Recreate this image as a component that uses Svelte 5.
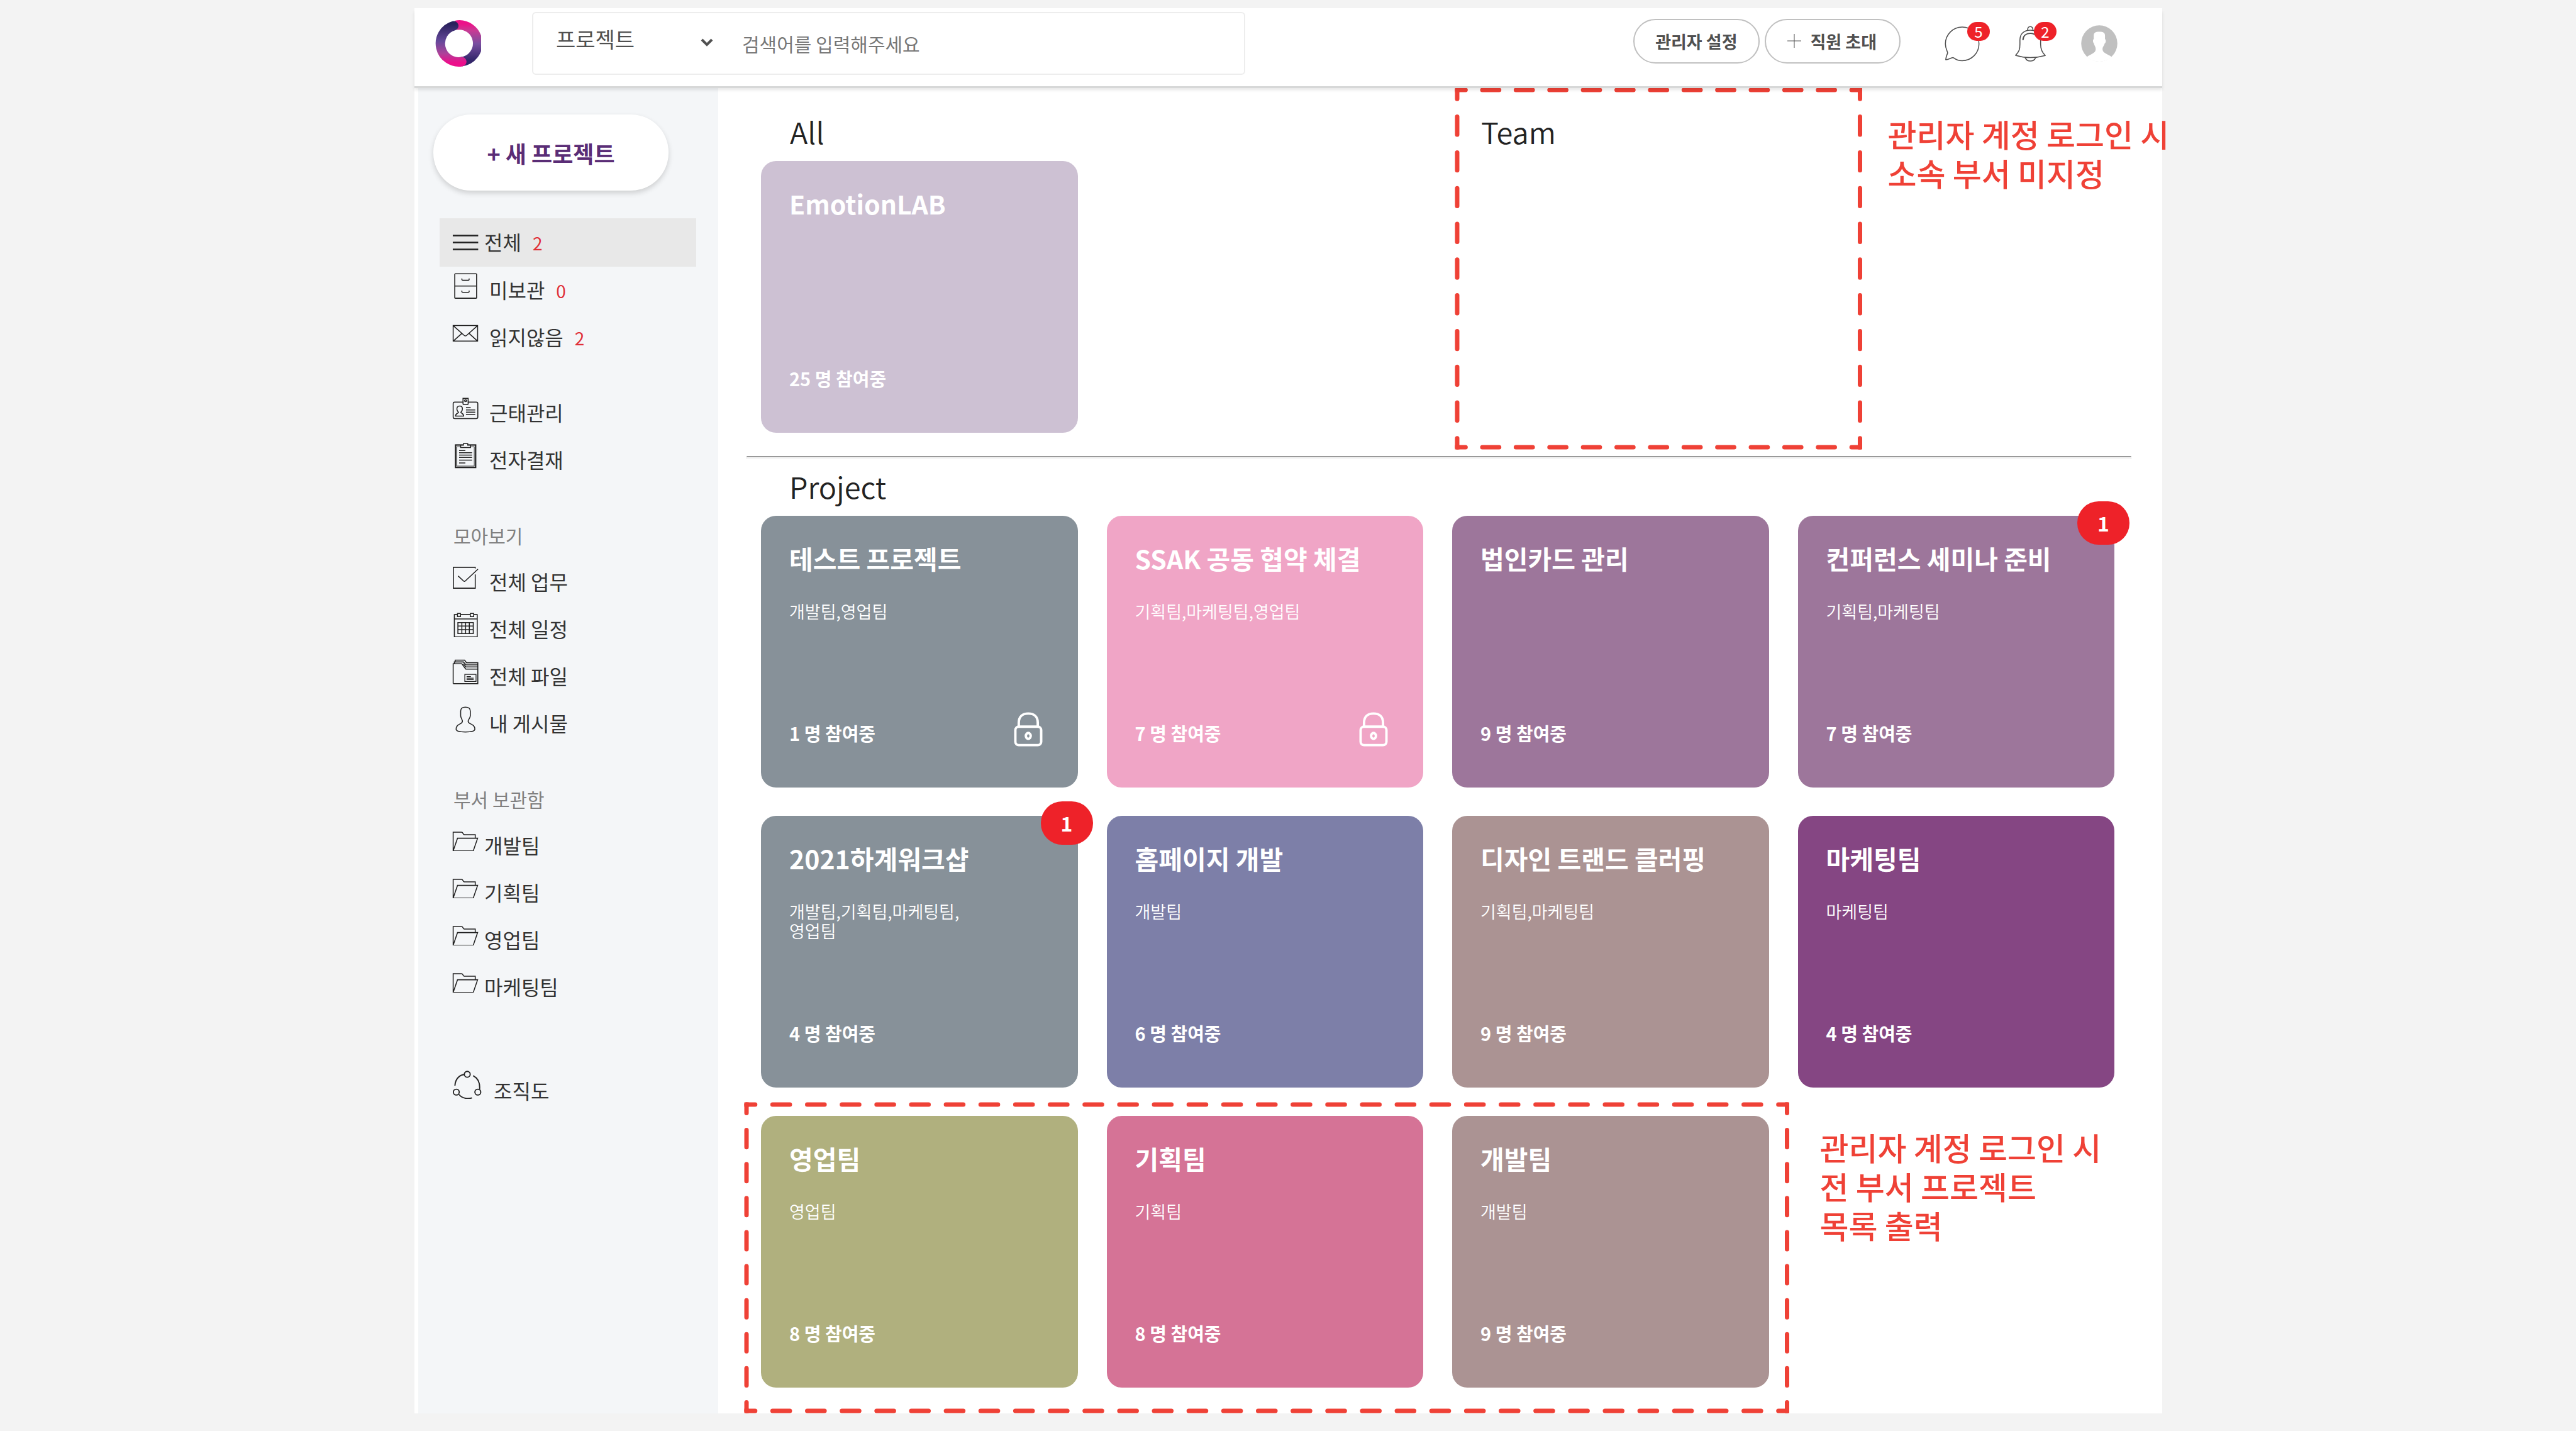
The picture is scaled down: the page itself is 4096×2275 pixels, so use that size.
<script lang="ts">
  type Item = { label: string; icon: string; count?: number; active?: boolean; tight?: boolean };
  type Card = { title: string; color: string; teams?: string[]; members: number; locked?: boolean; badge?: number };

  const groups: { heading?: string; items: Item[] }[] = [
    {
      items: [
        { label: '전체', icon: 'menu', count: 2, active: true, tight: true },
        { label: '미보관', icon: 'cabinet', count: 0 },
        { label: '읽지않음', icon: 'mail', count: 2 },
      ],
    },
    {
      items: [
        { label: '근태관리', icon: 'idcard' },
        { label: '전자결재', icon: 'clipboard' },
      ],
    },
    {
      heading: '모아보기',
      items: [
        { label: '전체 업무', icon: 'check' },
        { label: '전체 일정', icon: 'calendar' },
        { label: '전체 파일', icon: 'files' },
        { label: '내 게시물', icon: 'person' },
      ],
    },
    {
      heading: '부서 보관함',
      items: [
        { label: '개발팀', icon: 'folder', tight: true },
        { label: '기획팀', icon: 'folder', tight: true },
        { label: '영업팀', icon: 'folder', tight: true },
        { label: '마케팅팀', icon: 'folder', tight: true },
      ],
    },
  ];

  const all: Card = { title: 'EmotionLAB', color: 'lilac', members: 25 };

  const projects: Card[] = [
    { title: '테스트 프로젝트', color: 'slate', teams: ['개발팀,영업팀'], members: 1, locked: true },
    { title: 'SSAK 공동 협약 체결', color: 'pink', teams: ['기획팀,마케팅팀,영업팀'], members: 7, locked: true },
    { title: '법인카드 관리', color: 'mauve', members: 9 },
    { title: '컨퍼런스 세미나 준비', color: 'mauve', teams: ['기획팀,마케팅팀'], members: 7, badge: 1 },
    { title: '2021하계워크샵', color: 'slate', teams: ['개발팀,기획팀,마케팅팀,', '영업팀'], members: 4, badge: 1 },
    { title: '홈페이지 개발', color: 'blue', teams: ['개발팀'], members: 6 },
    { title: '디자인 트랜드 클러핑', color: 'taupe', teams: ['기획팀,마케팅팀'], members: 9 },
    { title: '마케팅팀', color: 'plum', teams: ['마케팅팀'], members: 4 },
  ];

  const departments: Card[] = [
    { title: '영업팀', color: 'olive', teams: ['영업팀'], members: 8 },
    { title: '기획팀', color: 'rose', teams: ['기획팀'], members: 8 },
    { title: '개발팀', color: 'taupe', teams: ['개발팀'], members: 9 },
  ];
</script>

{#snippet icon(name: string)}
  {#if name === 'menu'}
    <svg class="icon" viewBox="205 203 134 86" aria-hidden="true"><path stroke-width="8" d="M208 211H337M208 246H337M208 281H337" /></svg>
  {:else if name === 'cabinet'}
    <svg class="icon" viewBox="205 401 134 132" aria-hidden="true"><rect x="218" y="405" width="111" height="124" rx="3" /><path d="M218 467H329M254 429V434Q254 438 259 438H287Q291 438 291 434V429M254 490V495Q254 499 259 499H287Q291 499 291 495V490" /></svg>
  {:else if name === 'mail'}
    <svg class="icon" viewBox="205 661 134 88" aria-hidden="true"><path d="M210 666H334V745H210ZM210 666L266 716Q272 721 278 716L334 666M210 745L254 706M334 745L291 706" /></svg>
  {:else if name === 'idcard'}
    <svg class="icon" viewBox="205 1032 134 111" aria-hidden="true"><path d="M258 1055H218Q210 1055 210 1063V1131Q210 1139 218 1139H327Q335 1139 335 1131V1063Q335 1055 327 1055H287M260 1036H286V1064Q286 1068 282 1068H264Q260 1068 260 1064Z" /><circle cx="273" cy="1048" r="5" /><path d="M243 1075C232 1075 228 1082 229 1092C230 1100 234 1103 237 1107C235 1113 222 1112 222 1126H263C263 1112 251 1113 249 1107C252 1103 257 1098 257 1090C257 1080 252 1075 243 1075ZM275 1083H299M275 1095H322M275 1106H322M275 1118H322" /></svg>
  {:else if name === 'clipboard'}
    <svg class="icon" viewBox="205 1258 134 131" aria-hidden="true"><rect x="222" y="1269" width="102" height="114" stroke-width="7" /><rect x="229" y="1278" width="88" height="98" stroke-width="3" /><path fill="#f4f6f8" d="M248 1282V1270H262V1262H284V1270H298V1282Z" /><path d="M240 1297H272M240 1308H306M240 1320H306M240 1332H306M240 1346H306M240 1360H272" /></svg>
  {:else if name === 'check'}
    <svg class="icon" viewBox="205 320 134 118" aria-hidden="true"><path d="M322 332V326H211V432H322V362M235 370L262 395Q267 400 272 395L336 335" /></svg>
  {:else if name === 'calendar'}
    <svg class="icon" viewBox="205 554 134 126" aria-hidden="true"><path d="M231 564H216V677H332V564H315M248 564H296M216 586H332M232 558H247V574H232ZM297 558H314V574H297ZM234 604H312V660H234ZM254 604V660M273 604V660M292 604V660M234 622H312M234 640H312" /></svg>
  {:else if name === 'files'}
    <svg class="icon" viewBox="205 788 134 129" aria-hidden="true"><path d="M210 912V811H254L274 838H335M210 912H335V806H278L268 793H220V802M216 810V802H262L275 817H335M262 811L274 827H335" /><path stroke-width="4" d="M269 865H326V901H269ZM278 876H300M278 884H314M278 891H314" /></svg>
  {:else if name === 'person'}
    <svg class="icon" viewBox="205 1026 134 134" aria-hidden="true"><path d="M272 1030C254 1030 248 1038 248 1050V1072C248 1088 257 1090 257 1102C257 1118 225 1112 225 1142C225 1152 246 1156 272 1156C298 1156 320 1152 320 1142C320 1112 286 1118 286 1102C286 1090 297 1088 297 1072V1050C297 1038 290 1030 272 1030Z" /></svg>
  {:else if name === 'folder'}
    <svg class="icon" viewBox="205 0 134 102" aria-hidden="true"><path d="M210 98V3H252Q257 3 259 8T266 16H322V34M210 98L232 34H334L312 98Z" /></svg>
  {/if}
{/snippet}

{#snippet frame(cols: number, rows: number)}
  <svg class="frame" aria-hidden="true">
    <line x1="0" y1="0" x2="100%" y2="0" pathLength={cols} />
    <line x1="0" y1="100%" x2="100%" y2="100%" pathLength={cols} />
    <line x1="0" y1="0" x2="0" y2="100%" pathLength={rows} />
    <line x1="100%" y1="0" x2="100%" y2="100%" pathLength={rows} />
    <line class="corner" x1="0" y1="0" x2="0" y2="0" />
    <line class="corner" x1="100%" y1="0" x2="100%" y2="0" />
    <line class="corner" x1="0" y1="100%" x2="0" y2="100%" />
    <line class="corner" x1="100%" y1="100%" x2="100%" y2="100%" />
  </svg>
{/snippet}

{#snippet card(c: Card)}
  <a class="card {c.color}" href="#project">
    <h3>{c.title}</h3>
    {#if c.teams}
      <p class="teams">{#each c.teams as line}<span>{line}</span>{/each}</p>
    {/if}
    <div class="foot">
      <span class="members">{c.members} 명 참여중</span>
      {#if c.locked}
        <svg class="lock" viewBox="0 0 59 71" role="img" aria-label="비공개">
          <rect x="3" y="30" width="53" height="38" rx="7" />
          <path d="M10 29V22C10 9 18 3 29.500 3S49 9 49 22V29" />
          <ellipse cx="29.500" cy="49" rx="5" ry="6" />
        </svg>
      {/if}
    </div>
    {#if c.badge}<span class="badge">{c.badge}</span>{/if}
  </a>
{/snippet}

<div class="canvas">
  <div class="page">
    <header>
      <a class="logo" href="#home" aria-label="홈">
        <svg viewBox="0 0 100 100" aria-hidden="true">
          <defs>
            <linearGradient id="ringRight" x1="0" y1="0" x2="0" y2="100" gradientUnits="userSpaceOnUse">
              <stop offset="0.08" stop-color="#ec1189" />
              <stop offset="0.22" stop-color="#c93a94" />
              <stop offset="0.5" stop-color="#784fa0" />
              <stop offset="0.85" stop-color="#33266a" />
            </linearGradient>
            <linearGradient id="ringLeft" x1="0" y1="0" x2="0" y2="100" gradientUnits="userSpaceOnUse">
              <stop offset="0.08" stop-color="#29205c" />
              <stop offset="0.45" stop-color="#66499b" />
              <stop offset="0.7" stop-color="#ab439a" />
              <stop offset="0.9" stop-color="#ec0f8b" />
            </linearGradient>
          </defs>
          <path d="M46 11A39 39 0 1 1 58 88" fill="none" stroke="url(#ringRight)" stroke-width="20" />
          <path d="M59 88A39 39 0 0 1 42 12" fill="none" stroke="url(#ringLeft)" stroke-width="20" stroke-linecap="round" />
        </svg>
      </a>
      <form class="search" role="search">
        <div class="scope">
          <select aria-label="검색 범위"><option>프로젝트</option></select>
          <svg viewBox="0 0 22 14" aria-hidden="true"><path d="M3 3L11 11L19 3" /></svg>
        </div>
        <input type="search" aria-label="검색어" placeholder="검색어를 입력해주세요" />
      </form>
      <div class="actions">
        <button class="pill" type="button">관리자 설정</button>
        <button class="pill invite" type="button">
          <svg viewBox="0 0 22 22" aria-hidden="true"><path d="M0 11H22M11 0V22" /></svg>직원 초대
        </button>
      </div>
      <div class="tools">
        <button class="tool" type="button" aria-label="메시지">
          <svg class="chat" viewBox="96 96 218 222" aria-hidden="true"><path d="M144 294C130 297 117 307 103 306C104 292 108 280 115 264C113 252 101 236 101 208A104 104 0 1 1 205 312C182 312 166 305 153 295Q148 292 144 294Z" /></svg>
          <span class="dot">5</span>
        </button>
        <button class="tool" type="button" aria-label="알림">
          <svg class="bell" viewBox="530 96 198 222" aria-hidden="true">
            <path d="M537 279C560 255 564 240 564 210V185C564 145 590 123 628 123S692 145 692 185V210C692 240 702 262 721 280C700 286 665 293 628 293S560 286 537 279ZM596 293C603 308 615 314 628 314S655 308 662 293M611 122C612 108 618 101 628 101S644 108 645 122" />
            <path stroke-width="8" d="M583 182C585 155 605 143 628 143Q640 143 653 148" />
          </svg>
          <span class="dot">2</span>
        </button>
        <button class="tool" type="button" aria-label="내 계정">
          <svg class="avatar" viewBox="944 96 224 224" aria-hidden="true">
            <circle cx="1056" cy="208" r="111" fill="#c0c0c0" />
            <path fill="#fff" d="M1056 137C1030 137 1022 144 1022 160V182C1015 184 1016 204 1023 208C1026 224 1035 228 1034 246C1032 270 1005 272 980 291A114 114 0 0 0 1132 291C1107 272 1078 270 1076 246C1075 228 1086 224 1089 208C1098 204 1098 184 1091 182V160C1091 144 1082 137 1056 137Z" />
          </svg>
        </button>
      </div>
    </header>

    <div class="body">
      <aside>
        <button class="new" type="button">+ 새 프로젝트</button>
        <nav aria-label="메뉴">
          {#each groups as g}
            <section class="group">
              {#if g.heading}<h2>{g.heading}</h2>{/if}
              {#each g.items as it}
                <a class="item" class:active={it.active} class:tight={it.tight} href="#menu">
                  {@render icon(it.icon)}
                  <span class="label">{it.label}{#if it.count !== undefined}<span class="count">{it.count}</span>{/if}</span>
                </a>
              {/each}
            </section>
          {/each}
          <a class="item org" href="#org">
            <svg class="icon" viewBox="205 0 151 147" aria-hidden="true"><circle cx="282" cy="19" r="15" /><circle cx="226" cy="110" r="15" /><circle cx="336" cy="110" r="15" /><path d="M219 77C221 40 245 22 267 20M312 26C335 38 348 60 345 95M240 122C255 142 285 147 306 139" /></svg>
            <span class="label">조직도</span>
          </a>
        </nav>
      </aside>

      <main>
        <div class="columns top">
          <section>
            <h2>All</h2>
            {@render card(all)}
          </section>
          <section class="team">
            <h2>Team</h2>
            {@render frame(12, 10)}
            <p class="note">관리자 계정 로그인 시<br />소속 부서 미지정</p>
          </section>
        </div>
        <hr />
        <section>
          <h2>Project</h2>
          <div class="columns">
            {#each projects as p}{@render card(p)}{/each}
          </div>
          <div class="columns departments">
            {#each departments as p}{@render card(p)}{/each}
            {@render frame(30, 9)}
            <p class="note">관리자 계정 로그인 시<br />전 부서 프로젝트<br />목록 출력</p>
          </div>
        </section>
      </main>
    </div>
  </div>
</div>

<style>
  :global(body) {
    background: #f3f3f3;
  }
  .canvas {
    box-sizing: border-box;
    padding: 13px 658px 28px 659px;
    font-family: 'Noto Sans CJK KR', 'Noto Sans', sans-serif;
    color: #333;
  }
  .canvas :global(*) {
    box-sizing: border-box;
  }
  .page {
    background: #fff;
  }
  h2,
  h3,
  p {
    margin: 0;
  }
  a {
    color: inherit;
    text-decoration: none;
  }
  button,
  input,
  select {
    font-family: inherit;
    margin: 0;
    border: 0;
    background: none;
    padding: 0;
  }
  svg {
    display: block;
    flex: none;
  }

  /* header */
  header {
    position: relative;
    z-index: 1;
    display: flex;
    align-items: center;
    padding: 6px 71px 18px 31px;
    box-shadow: 0 3px 0 #d7d8d8, 0 6px 5px rgba(0, 0, 0, 0.1);
    background: #fff;
  }
  .logo svg {
    width: 75px;
    height: 75px;
  }
  .search {
    display: flex;
    height: 100px;
    width: 1134px;
    margin-left: 81px;
    border: 2px solid #ededed;
    border-radius: 6px;
  }
  .scope {
    display: grid;
    width: 316px;
  }
  .scope select,
  .scope svg {
    grid-area: 1 / 1;
  }
  .scope select {
    appearance: none;
    padding: 0 0 16px 36px;
    font-size: 34px;
    color: #505050;
  }
  .scope svg {
    align-self: center;
    justify-self: end;
    width: 22px;
    height: 14px;
    margin: 0 29px 4px 0;
    fill: none;
    stroke: #505050;
    stroke-width: 4;
    pointer-events: none;
  }
  .search input {
    flex: 1;
    padding: 0 16px;
    font-size: 30px;
    outline: none;
    appearance: none;
  }
  .search input::placeholder {
    color: #777;
    opacity: 1;
  }
  .actions {
    display: flex;
    gap: 8px;
    margin: 0 70px 8px auto;
  }
  .pill {
    display: flex;
    align-items: center;
    justify-content: center;
    gap: 15px;
    height: 71px;
    padding: 0 33px;
    border: 2px solid #c0c0c0;
    border-radius: 36px;
    font-size: 27px;
    font-weight: 700;
    color: #505050;
    white-space: nowrap;
  }
  .invite {
    padding: 0 36px 0 34px;
  }
  .pill svg {
    width: 22px;
    height: 22px;
    stroke: #505050;
    stroke-width: 1;
  }
  .tools {
    display: flex;
    gap: 55px;
  }
  .tool {
    position: relative;
  }
  .chat,
  .bell {
    height: 57px;
    fill: none;
    stroke: #505050;
    stroke-width: 6;
    stroke-linejoin: round;
    stroke-linecap: round;
  }
  .chat {
    width: 56px;
  }
  .bell {
    width: 51px;
  }
  .avatar {
    width: 58px;
    height: 58px;
  }
  .dot {
    position: absolute;
    top: -5px;
    right: -16px;
    width: 36px;
    border-radius: 15px;
    background: #ee2229;
    color: #fff;
    font-size: 24px;
    line-height: 30px;
    text-align: center;
  }

  /* sidebar */
  .body {
    display: flex;
  }
  aside {
    flex: none;
    width: 477px;
    margin-left: 6px;
    padding-top: 45px;
    background: #f4f6f8;
  }
  .new {
    display: block;
    width: 374px;
    height: 121px;
    margin-left: 24px;
    border-radius: 60px;
    background: #fff;
    box-shadow: 0 4px 8px rgba(0, 0, 0, 0.16);
    font-size: 36px;
    font-weight: 700;
    color: #5a2d76;
  }
  nav {
    display: flex;
    flex-direction: column;
    gap: 45px;
    margin: 44px 35px 0 34px;
  }
  .group h2 {
    padding-left: 22px;
    font-size: 30px;
    font-weight: 400;
    line-height: 74px;
    color: #808080;
  }
  .item {
    display: flex;
    align-items: center;
    gap: 17px;
    height: 75px;
    padding-left: 20px;
    font-size: 32px;
  }
  .label {
    padding-bottom: 3px;
  }
  .tight {
    gap: 9px;
  }
  .icon {
    width: 42px;
    margin-bottom: 14px;
    fill: none;
    stroke: #222;
    stroke-width: 5;
  }
  .active {
    height: 77px;
    background: #e8e8e8;
  }
  .active .icon {
    margin-bottom: 0;
  }
  .org {
    gap: 19px;
    margin-top: 45px;
  }
  .org .icon {
    width: 47px;
    margin-bottom: 20px;
    stroke-width: 6;
  }
  .count {
    margin-left: 18px;
    font-size: 28px;
    color: #e03038;
  }

  /* content */
  main {
    flex: 1;
    min-width: 0;
    padding: 38px 49px 41px 45px;
  }
  main h2 {
    margin-bottom: 13px;
    padding-left: 68px;
    font-family: 'Noto Sans CJK KR DemiLight', 'Noto Sans CJK KR', sans-serif;
    font-size: 47px;
    font-weight: 400;
    line-height: 68px;
    color: #222;
  }
  .columns {
    display: grid;
    grid-template-columns: repeat(4, minmax(0, 1fr));
    gap: 45px 46px;
    padding: 0 27px 0 23px;
  }
  .top h2 {
    padding-left: 46px;
  }
  .team {
    position: relative;
    grid-column: 3;
  }
  hr {
    height: 5px;
    margin: 37px 0 9px;
    border: 1px solid #e8e8e8;
    border-top: 2px solid #999;
  }
  .departments {
    position: relative;
    margin-top: 45px;
  }
  .card {
    position: relative;
    display: flex;
    flex-direction: column;
    height: 432px;
    padding: 37px 20px 65px 45px;
    border-radius: 24px;
    color: #fff;
  }
  .card h3 {
    font-size: 41px;
    font-weight: 700;
    line-height: 60px;
    white-space: nowrap;
  }
  .teams {
    margin-top: 39px;
    font-family: 'Noto Sans CJK KR DemiLight', 'Noto Sans CJK KR', sans-serif;
    font-size: 27px;
    line-height: 31px;
  }
  .teams span {
    display: block;
  }
  .foot {
    display: flex;
    justify-content: space-between;
    align-items: flex-end;
    margin-top: auto;
    padding-right: 36px;
  }
  .members {
    font-size: 29px;
    font-weight: 700;
    line-height: 44px;
  }
  .lock {
    width: 46px;
    height: 55px;
    fill: none;
    stroke: #fff;
    stroke-width: 5;
  }
  .badge {
    position: absolute;
    top: -23px;
    right: -24px;
    width: 83px;
    border-radius: 34px;
    background: #ee2229;
    font-size: 32px;
    font-weight: 700;
    line-height: 69px;
    text-align: center;
  }
  .lilac {
    background: #cdc1d3;
  }
  .slate {
    background: #879199;
  }
  .pink {
    background: #f0a5c6;
  }
  .mauve {
    background: #9d769b;
  }
  .blue {
    background: #7d7fa8;
  }
  .taupe {
    background: #ab9393;
  }
  .plum {
    background: #854683;
  }
  .olive {
    background: #b0b07e;
  }
  .rose {
    background: #d57396;
  }

  /* review marks laid over the screen */
  .frame {
    position: absolute;
    overflow: visible;
    pointer-events: none;
  }
  .frame line {
    stroke: #ef4136;
    stroke-width: 7;
    stroke-linecap: round;
    stroke-dasharray: 0.5 0.5;
    stroke-dashoffset: 0.25;
  }
  .frame .corner {
    stroke-linecap: square;
    stroke-dasharray: none;
  }
  .team .frame {
    top: -32px;
    left: 8px;
    width: calc(100% + 137px);
    height: calc(100% + 55px);
  }
  .departments .frame {
    grid-area: 1 / 1 / 2 / 4;
    top: -18px;
    left: -23px;
    width: calc(100% + 52px);
    height: calc(100% + 55px);
  }
  .note {
    font-size: 50px;
    font-weight: 500;
    line-height: 62px;
    color: #ef4136;
    white-space: nowrap;
  }
  .team .note {
    position: absolute;
    top: 6px;
    left: calc(100% + 189px);
  }
  .departments .note {
    padding: 18px 0 0 35px;
  }
</style>
